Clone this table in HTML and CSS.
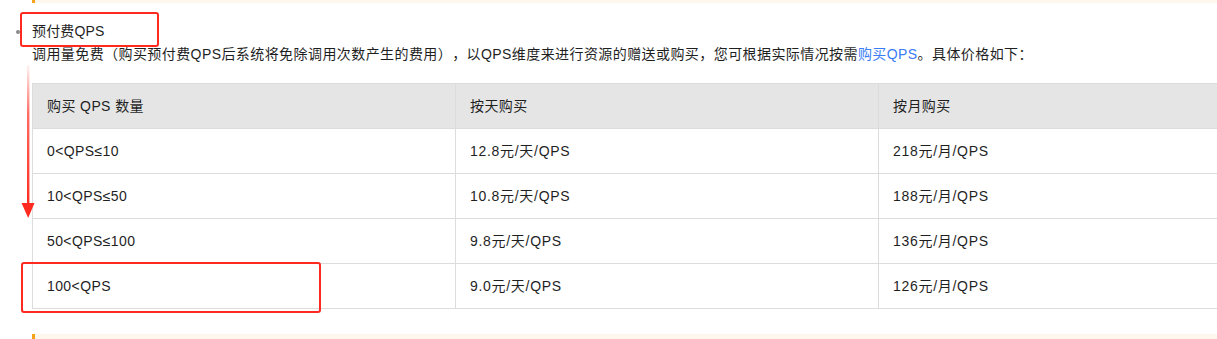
FILE: index.html
```html
<!DOCTYPE html>
<html lang="zh-CN">
<head>
<meta charset="utf-8">
<title>预付费QPS</title>
<link rel="stylesheet" href="styles.css">
</head>
<body>
<div class="page">
  <div class="note"></div>
  <ul class="list">
    <li class="item">
      <p class="title">预付费QPS</p>
      <p class="desc">调用量免费（购买预付费QPS后系统将免除调用次数产生的费用），以QPS维度来进行资源的赠送或购买，您可根据实际情况按需<a class="link" href="#">购买QPS</a>。具体价格如下：</p>
    </li>
  </ul>
  <table class="price">
    <thead>
      <tr><th>购买 QPS 数量</th><th>按天购买</th><th>按月购买</th></tr>
    </thead>
    <tbody>
      <tr><td>0&lt;QPS≤10</td><td>12.8元/天/QPS</td><td>218元/月/QPS</td></tr>
      <tr><td>10&lt;QPS≤50</td><td>10.8元/天/QPS</td><td>188元/月/QPS</td></tr>
      <tr><td>50&lt;QPS≤100</td><td>9.8元/天/QPS</td><td>136元/月/QPS</td></tr>
      <tr><td>100&lt;QPS</td><td>9.0元/天/QPS</td><td>126元/月/QPS</td></tr>
    </tbody>
  </table>
  <div class="note note-bottom"></div>

  <div class="mark mark-title"></div>
  <div class="mark mark-row"></div>
  <svg class="arrow" width="20" height="160" viewBox="0 0 20 160">
    <defs>
      <linearGradient id="fade" x1="0" y1="0" x2="0" y2="1">
        <stop offset="0" stop-color="#ff2a1f" stop-opacity="0.05"/>
        <stop offset="0.35" stop-color="#ff2a1f" stop-opacity="0.7"/>
        <stop offset="1" stop-color="#ff2a1f" stop-opacity="1"/>
      </linearGradient>
    </defs>
    <rect x="7" y="4" width="2.4" height="142" fill="url(#fade)"/>
    <polygon points="1.5,142 14.5,142 8.2,157" fill="#ff2a1f"/>
  </svg>
</div>
</body>
</html>
```

FILE: styles.css
```css
html, body {
  margin: 0;
  padding: 0;
  background: #ffffff;
}

body {
  overflow: hidden;
  font-family: "Liberation Sans", "Noto Sans CJK SC", sans-serif;
  font-size: 14px;
  color: #1f1f1f;
  text-spacing-trim: space-all;
}

.page {
  position: relative;
  width: 1217px;
  height: 339px;
  overflow: hidden;
}

.note {
  height: 3px;
  margin-left: 32px;
  border-left: 3px solid #f7a21b;
  background: #fdf7ee;
}

.note-bottom {
  height: 8px;
  margin-top: 25px;
}

.list {
  margin: 17px 0 0 0;
  padding-left: 32px;
  list-style: none;
}

.item {
  position: relative;
}

.item::before {
  content: "";
  position: absolute;
  left: -16px;
  top: 10px;
  width: 4px;
  height: 4px;
  border-radius: 50%;
  background: #8a8a8a;
}

.title,
.desc {
  margin: 0;
  line-height: 23px;
  white-space: nowrap;
}

.title {
  letter-spacing: 0.15px;
}

.desc {
  letter-spacing: 0.42px;
}

.link {
  color: #3a7cf4;
  text-decoration: none;
}

.price {
  margin: 17px 0 0 32px;
  width: 1270px;
  border-collapse: collapse;
  table-layout: fixed;
}

.price th,
.price td {
  border: 1px solid #dcdcdc;
  height: 44px;
  padding: 0 14px;
  text-align: left;
  font-weight: normal;
  line-height: 20px;
  white-space: nowrap;
  letter-spacing: 0.4px;
}

.price td:nth-child(2),
.price td:nth-child(3) {
  letter-spacing: 0.7px;
}

.price th {
  background: #e5e5e5;
}

.mark {
  position: absolute;
  border: 2.5px solid #ff2a1f;
  border-radius: 3px;
  box-sizing: border-box;
}

.mark-title {
  left: 20px;
  top: 12px;
  width: 139px;
  height: 35px;
}

.mark-row {
  left: 21px;
  top: 262px;
  width: 300px;
  height: 51px;
}

.arrow {
  position: absolute;
  left: 20px;
  top: 61px;
}
```
